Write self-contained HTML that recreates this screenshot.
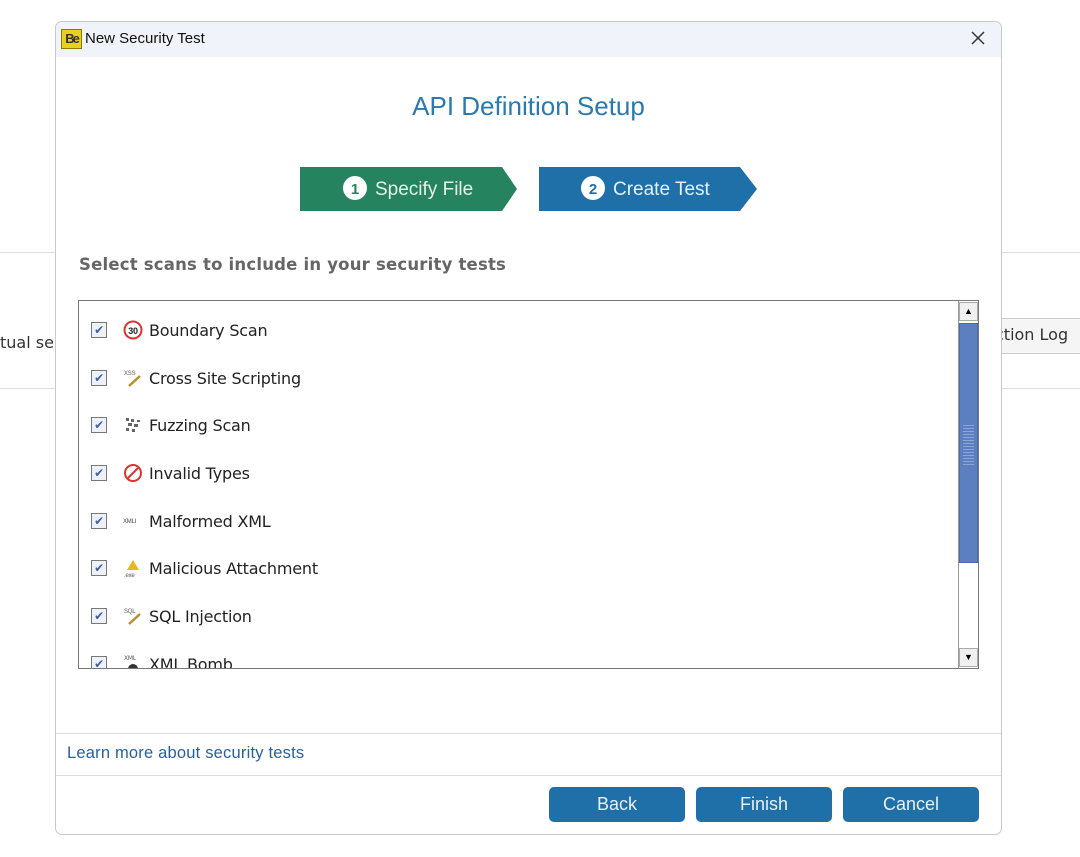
<!DOCTYPE html>
<html><head><style>
*{margin:0;padding:0;box-sizing:border-box}
body{width:1080px;height:857px;background:#fff;position:relative;overflow:hidden;font-family:"Liberation Sans",sans-serif}
.a{position:absolute}
.row{position:absolute;left:91px;height:20px;display:flex;align-items:center;font-size:16px;color:#222;font-family:"DejaVu Sans","Liberation Sans",sans-serif;letter-spacing:-0.2px}
.cb{width:16px;height:16px;border:1px solid #777;background:#eef2f8;color:#3a5fa8;font-size:12px;line-height:14px;text-align:center;margin-right:15px}
.ic{width:22px;height:20px;margin-right:5px;display:flex;align-items:center;justify-content:center}
.btn{position:absolute;top:787px;width:136px;height:35px;background:#1f6fa8;border-radius:5px;color:#e8f0f8;font-size:18px;text-align:center;line-height:35px}
</style></head><body>
<div class="a" style="left:0;top:252px;width:1080px;height:1px;background:#ddd"></div>
<div class="a" style="left:0;top:388px;width:1080px;height:1px;background:#ddd"></div>
<div class="a" style="left:0;top:333px;font-size:16px;color:#333;font-family:'DejaVu Sans',sans-serif">tual ser</div>
<div class="a" style="left:990px;top:318px;width:100px;height:36px;border:1px solid #ccc;background:#f5f5f5"></div>
<div class="a" style="left:995px;top:325px;font-size:16px;color:#333;font-family:'DejaVu Sans',sans-serif">ction Log</div>
<div class="a" style="left:55px;top:21px;width:947px;height:814px;background:#fff;border:1px solid #c8c8c8;border-radius:7px;overflow:hidden">
 <div class="a" style="left:0;top:0;width:947px;height:35px;background:#f0f3f9"></div>
</div>
<div class="a" style="left:61px;top:29px;width:21px;height:20px;background:#e6d21a;border:1px solid #8a7a00;font-size:13px;font-weight:bold;color:#333;line-height:18px;text-align:center;letter-spacing:-2px">Be</div>
<div class="a" style="left:85px;top:30px;font-size:15px;color:#111">New Security Test</div>
<svg class="a" style="left:970px;top:30px" width="16" height="16"><path d="M2 2 L14 14 M14 2 L2 14" stroke="#333" stroke-width="1.5"/></svg>
<div class="a" style="left:55px;top:91px;width:947px;text-align:center;font-size:26px;color:#2a7ab0">API Definition Setup</div>
<svg class="a" style="left:300px;top:167px" width="460" height="45">
<polygon points="0,0 202,0 217,22 202,44 0,44" fill="#25845f"/>
<polygon points="239,0 440,0 457,22 440,44 239,44" fill="#1f6fa8"/>
<circle cx="55" cy="21" r="12" fill="#fff"/><text x="55" y="27" text-anchor="middle" font-size="15" font-weight="bold" fill="#25845f" font-family="Liberation Sans">1</text>
<text x="75" y="28" font-size="19" fill="#e6f2ec" font-family="Liberation Sans">Specify File</text>
<circle cx="293" cy="21" r="12" fill="#fff"/><text x="293" y="27" text-anchor="middle" font-size="15" font-weight="bold" fill="#1f6fa8" font-family="Liberation Sans">2</text>
<text x="313" y="28" font-size="19" fill="#e6f0f8" font-family="Liberation Sans">Create Test</text>
</svg>
<div class="a" style="left:79px;top:255px;font-size:16.5px;font-weight:bold;color:#666;font-family:'DejaVu Sans',sans-serif;letter-spacing:0.2px">Select scans to include in your security tests</div>
<div class="a" style="left:78px;top:300px;width:901px;height:369px;border:1px solid #777;overflow:hidden">
 <div class="a" style="left:879px;top:0;width:20px;height:367px;background:#fff;border-left:1px solid #999"></div>
 <div class="a" style="left:880px;top:1px;width:19px;height:19px;background:#f0f0f0;border:1px solid #aaa;font-size:9px;text-align:center;line-height:17px">▲</div>
 <div class="a" style="left:880px;top:22px;width:19px;height:240px;background:#5b7fbf;border:1px solid #4a6aa8"></div>
 <div class="a" style="left:884px;top:124px;width:11px;height:40px;background:repeating-linear-gradient(0deg,#8aa6d8 0 1px,transparent 1px 3px)"></div>
 <div class="a" style="left:880px;top:347px;width:19px;height:19px;background:#f0f0f0;border:1px solid #aaa;font-size:9px;text-align:center;line-height:17px">▼</div>
</div>
<div class="row" style="top:320px"><div class="cb">✔</div><div class="ic"><svg width="20" height="20"><circle cx="10" cy="10" r="8.5" fill="#fff" stroke="#d33" stroke-width="2"/><text x="10" y="14" text-anchor="middle" font-size="9" font-weight="bold" fill="#222" font-family="Liberation Sans">30</text></svg></div>Boundary Scan</div>
<div class="row" style="top:368px"><div class="cb">✔</div><div class="ic"><svg width="20" height="20"><text x="1" y="7" font-size="6" fill="#555" font-family="Liberation Sans">XSS</text><path d="M6 18 L17 8" stroke="#b89030" stroke-width="2.5"/></svg></div>Cross Site Scripting</div>
<div class="row" style="top:415px"><div class="cb">✔</div><div class="ic"><svg width="20" height="20"><g fill="#666"><rect x="3" y="3" width="3" height="3"/><rect x="8" y="4" width="3" height="3"/><rect x="5" y="8" width="4" height="3"/><rect x="11" y="9" width="4" height="3"/><rect x="3" y="13" width="3" height="3"/><rect x="9" y="14" width="3" height="3"/><rect x="14" y="5" width="3" height="2"/></g></svg></div>Fuzzing Scan</div>
<div class="row" style="top:463px"><div class="cb">✔</div><div class="ic"><svg width="20" height="20"><circle cx="10" cy="10" r="8" fill="none" stroke="#d33" stroke-width="2"/><path d="M5 15 L15 5" stroke="#d33" stroke-width="2"/></svg></div>Invalid Types</div>
<div class="row" style="top:511px"><div class="cb">✔</div><div class="ic"><svg width="20" height="20"><text x="0" y="12" font-size="6" fill="#444" font-family="Liberation Sans">XMLI</text></svg></div>Malformed XML</div>
<div class="row" style="top:558px"><div class="cb">✔</div><div class="ic"><svg width="20" height="20"><polygon points="10,2 16,12 4,12" fill="#e8b820"/><text x="1" y="19" font-size="6" fill="#555" font-family="Liberation Sans">.exe</text></svg></div>Malicious Attachment</div>
<div class="row" style="top:606px"><div class="cb">✔</div><div class="ic"><svg width="20" height="20"><text x="1" y="7" font-size="6" fill="#555" font-family="Liberation Sans">SQL</text><path d="M6 18 L17 8" stroke="#b89030" stroke-width="2.5"/></svg></div>SQL Injection</div>
<div class="a" style="left:79px;top:652px;width:878px;height:16px;overflow:hidden"><div class="row" style="left:12px;top:2px"><div class="cb">✔</div><div class="ic"><svg width="20" height="20"><text x="1" y="6" font-size="6" fill="#555">XML</text><circle cx="10" cy="15" r="5" fill="#333"/></svg></div>XML Bomb</div></div>
<div class="a" style="left:56px;top:733px;width:945px;height:1px;background:#ddd"></div>
<div class="a" style="left:56px;top:775px;width:945px;height:1px;background:#ddd"></div>
<div class="a" style="left:67px;top:744px;font-size:16.5px;color:#2a5f9e;letter-spacing:0.2px">Learn more about security tests</div>
<div class="btn" style="left:549px">Back</div>
<div class="btn" style="left:696px">Finish</div>
<div class="btn" style="left:843px">Cancel</div>
</body></html>
